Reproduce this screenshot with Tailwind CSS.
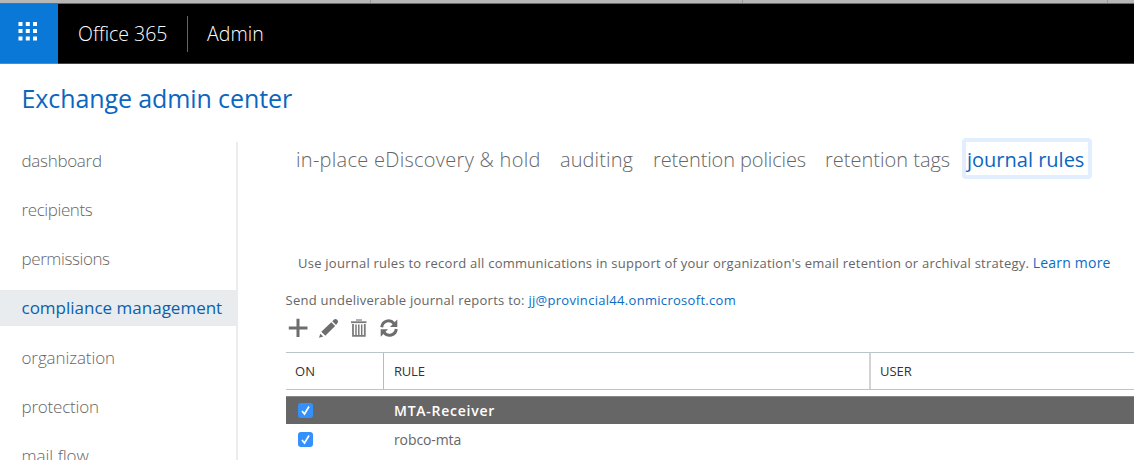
<!doctype html>
<html lang="en">
  <head>
    <meta charset="UTF-8" />
    <meta name="viewport" content="width=device-width, initial-scale=1.0" />
    <title>Exchange admin center</title>
    <script src="https://cdn.jsdelivr.net/npm/@tailwindcss/browser@4"></script>
  </head>

  <body class="h-[460px] overflow-hidden bg-white font-['Open_Sans','Noto_Sans',sans-serif] text-[#666] whitespace-nowrap">
    <div class="h-[4px] flex bg-[#b7b7b7] border-b border-[#6b6b6b]">
      <div class="w-[371px] border-r border-[#999]"></div>
      <div class="w-[372px] border-r border-[#999]"></div>
      <div class="w-[365px] border-r border-[#999]"></div>
    </div>

    <header class="h-[60px] flex items-center bg-black border-b border-[#444] text-white text-[19.5px] font-light">
      <div class="w-[58px] h-[60px] bg-[#0a78d7] border-b border-[#3a94e6]">
        <svg class="mt-[18px] ml-[18px]" width="20" height="20" fill="#fff">
          <path d="M.5 0h4v4h-4zM7.8 0h4v4h-4zM15 0h4v4h-4zM.5 7h4v4h-4zM7.8 7h4v4h-4zM15 7h4v4h-4zM.5 14.5h4v4h-4zM7.8 14.5h4v4h-4zM15 14.5h4v4h-4z" />
        </svg>
      </div>
      <div class="w-[129px] pl-5 pt-px" id="product">Office 365</div>
      <div class="w-px h-9 bg-[#666]"></div>
      <div class="pl-[19px] pt-px tracking-[0.1px]">Admin</div>
    </header>

    <h1 class="h-[78px] pl-[21.5px] pt-[16px] text-[25px] leading-9 tracking-[-0.1px] text-[#0a66bf]">Exchange admin center</h1>

    <div class="flex">
      <nav class="w-[238px] h-[318px] shrink-0 flex flex-col gap-[13.2px] border-r-2 border-[#ececed] text-[17px] leading-[38px] font-light *:h-9 *:shrink-0 *:pl-[21.5px]">
        <a class="tracking-[-0.3px]">dashboard</a>
        <a class="tracking-[-0.4px]">recipients</a>
        <a class="tracking-[-0.4px]">permissions</a>
        <a class="-mr-0.5 bg-[#e8ecef] font-normal leading-9 text-[#0a5fae]">compliance management</a>
        <a class="tracking-[-0.1px]">organization</a>
        <a class="tracking-[-0.2px]">protection</a>
        <a>mail flow</a>
      </nav>

      <main class="grow min-w-0 pl-[48px]">
        <div class="h-[108px] pl-[10px] flex items-start text-[20px] leading-9 font-light">
          <a class="w-[264px] tracking-[0.28px]">in-place eDiscovery &amp; hold</a>
          <a class="w-[93px] tracking-[0.1px]">auditing</a>
          <a class="w-[172px] tracking-[-0.12px]">retention policies</a>
          <a class="w-[137px]">retention tags</a>
          <a class="-mt-[4px] h-[41px] w-[130px] border-4 border-[#e2edfd] rounded-[4px] pl-[1px] font-normal text-[#0a66bf]">journal rules</a>
        </div>

        <p class="pl-[12px] text-[13px] leading-[26px] tracking-[0.245px]">Use journal rules to record all communications in support of your organization's email retention or archival strategy. <a class="text-sm tracking-[0.2px] text-[#0a6cc4]">Learn more</a></p>
        <p class="mt-[11px] -ml-[0.5px] text-[13px] leading-[26px] tracking-[0.25px]">Send undeliverable journal reports to: <a class="tracking-[0.3px] text-[#0a6cc4]">jj@provincial44.onmicrosoft.com</a></p>

        <div class="h-[39px] pt-[5px] flex gap-[10px] text-[#6d6d6d]">
          <svg width="22" height="20" viewBox="0 0 22 20" fill="currentColor"><path d="M2.800 8.500h7.700V.800h3v7.700h8v3h-8V19h-3v-7.500H2.800z" /></svg>
          <svg width="21" height="20" viewBox="0 0 21 20" fill="currentColor"><path d="M1 19.700l1.300-4 3 2.800zM3.300 13.800L13.300 4.200l3.800 3.800L7.300 17.700zM14.300 3.300l1.700-1.800q1.500-1.200 3.200.2 1.600 1.600.4 3.200L18 7z" /></svg>
          <svg width="20" height="20" viewBox="0 0 20 20" fill="none" stroke="#7c7c7c"><path d="M7 2h6" stroke-width="1.200" /><path d="M2 4.200h15.500" stroke-width="1.800" /><path d="M4 6v11.800h11.800V6" stroke-width="1.800" /><path d="M7 6.500v11M9.800 6.500v11M12.700 6.500v11" stroke-width="1.500" /></svg>
          <svg width="20" height="20" viewBox="0 0 20 20" fill="none" stroke="currentColor" stroke-width="3"><path d="M2.700 9.200C3.500 2.500 11 .800 15 5.500M17.300 11C16.500 17.500 9 19.300 5 14.500" /><path d="M18.300 1.500V9H11zM1.700 18.700V11.200H9z" fill="currentColor" stroke="none" /></svg>
        </div>

        <div class="h-[38px] flex border-y border-[#b9c5c8] text-[13px] leading-9 text-[#333]">
          <div class="w-[98px] pl-[9px] border-r border-[#bbb] tracking-[0.2px]">ON</div>
          <div class="w-[487px] pl-[10px] border-r-2 border-[#d3d3d3] tracking-[-0.2px]">RULE</div>
          <div class="pl-[9px]">USER</div>
        </div>

        <div class="mt-[6px] h-[28px] flex items-center bg-[#666] border-t border-[#888] text-sm font-semibold text-white">
          <div class="w-[108px] pl-[11.5px]">
            <svg width="15" height="15" viewBox="0 0 15 15"><rect width="15" height="15" rx="3" fill="#3491fb" /><path d="M4 8l2.500 3L11 3.500" fill="none" stroke="#fff" stroke-width="1.700" /></svg>
          </div>
          <div class="tracking-[0.75px]">MTA-Receiver</div>
        </div>
        <div class="h-[30px] flex items-center text-sm">
          <div class="w-[108px] pl-[11.5px]">
            <svg width="15" height="15" viewBox="0 0 15 15"><rect width="15" height="15" rx="3" fill="#3491fb" /><path d="M4 8l2.500 3L11 3.500" fill="none" stroke="#fff" stroke-width="1.700" /></svg>
          </div>
          <div class="pt-0.5 tracking-[-0.1px]">robco-mta</div>
        </div>
      </main>
    </div>
  </body>
</html>
